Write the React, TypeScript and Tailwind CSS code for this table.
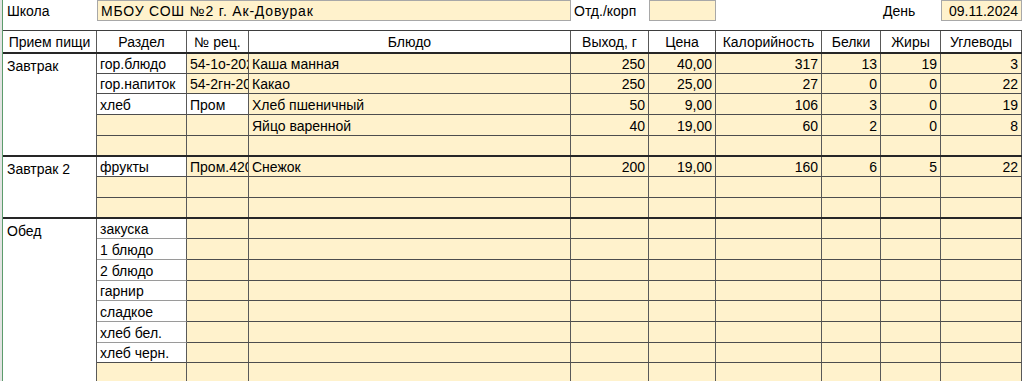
import type { ReactNode } from 'react';

type Align = 'left' | 'right' | 'center';

interface Col {
  w: string;
  align: Align;
}

// columns after the meal column: Раздел .. Углеводы
const cols: Col[] = [
  { w: 'w-[90px]', align: 'left' },
  { w: 'w-[62px]', align: 'left' },
  { w: 'w-[322px]', align: 'left' },
  { w: 'w-[78px]', align: 'right' },
  { w: 'w-[67px]', align: 'right' },
  { w: 'w-[106px]', align: 'right' },
  { w: 'w-[59px]', align: 'right' },
  { w: 'w-[60px]', align: 'right' },
  { w: 'w-[81px]', align: 'right' },
];

const headers = ['Раздел', '№ рец.', 'Блюдо', 'Выход, г', 'Цена', 'Калорийность', 'Белки', 'Жиры', 'Углеводы'];

interface Row {
  h: string;
  cells: string[];
  // which of the first two columns are white (filled in)
  whiteB?: boolean;
  whiteC?: boolean;
  lightLine?: boolean;
}

interface Section {
  meal: string;
  rows: Row[];
}

const empty = ['', '', '', '', '', '', '', '', ''];

const sections: Section[] = [
  {
    meal: 'Завтрак',
    rows: [
      { h: 'h-[20px]', whiteB: true, cells: ['гор.блюдо', '54-1о-2020', 'Каша манная', '250', '40,00', '317', '13', '19', '3'] },
      { h: 'h-[20px]', whiteB: true, cells: ['гор.напиток', '54-2гн-2020', 'Какао', '250', '25,00', '27', '0', '0', '22'] },
      { h: 'h-[21px]', whiteB: true, whiteC: true, cells: ['хлеб', 'Пром', 'Хлеб пшеничный', '50', '9,00', '106', '3', '0', '19'] },
      { h: 'h-[21px]', cells: ['', '', 'Яйцо варенной', '40', '19,00', '60', '2', '0', '8'] },
      { h: 'h-[19px]', cells: empty },
    ],
  },
  {
    meal: 'Завтрак 2',
    rows: [
      { h: 'h-[20px]', whiteB: true, cells: ['фрукты', 'Пром.420', 'Снежок', '200', '19,00', '160', '6', '5', '22'] },
      { h: 'h-[21px]', cells: empty },
      { h: 'h-[19px]', cells: empty },
    ],
  },
  {
    meal: 'Обед',
    rows: [
      { h: 'h-[20px]', whiteB: true, lightLine: true, cells: ['закуска', '', '', '', '', '', '', '', ''] },
      { h: 'h-[21px]', whiteB: true, lightLine: true, cells: ['1 блюдо', '', '', '', '', '', '', '', ''] },
      { h: 'h-[21px]', whiteB: true, lightLine: true, cells: ['2 блюдо', '', '', '', '', '', '', '', ''] },
      { h: 'h-[20px]', whiteB: true, lightLine: true, cells: ['гарнир', '', '', '', '', '', '', '', ''] },
      { h: 'h-[21px]', whiteB: true, lightLine: true, cells: ['сладкое', '', '', '', '', '', '', '', ''] },
      { h: 'h-[21px]', whiteB: true, lightLine: true, cells: ['хлеб бел.', '', '', '', '', '', '', '', ''] },
      { h: 'h-[20px]', whiteB: true, cells: ['хлеб черн.', '', '', '', '', '', '', '', ''] },
      { h: 'h-[21px]', cells: empty },
      { h: 'h-[21px]', cells: empty },
    ],
  },
];

function Cell({ col, bg, line, last, children }: { col: Col; bg: string; line: string; last: boolean; children?: ReactNode }) {
  const align =
    col.align === 'right' ? 'justify-end pr-[3px]' : col.align === 'center' ? 'justify-center' : 'justify-start pl-[3px]';
  return (
    <div
      className={`${col.w} h-full shrink-0 box-border flex items-center pt-[1px] overflow-hidden whitespace-nowrap border-r border-[#595959] ${align} ${bg} ${
        last ? '' : `border-b ${line}`
      }`}
    >
      {children}
    </div>
  );
}

function TableRow({ row, last }: { row: Row; last: boolean }) {
  return (
    <div className={`flex shrink-0 ${row.h}`}>
      {cols.map((col, i) => {
        let bg = 'bg-[#fff2cc]';
        if (i === 0 && row.whiteB) bg = 'bg-white';
        if (i === 1 && row.whiteC) bg = 'bg-white';
        const line = i === 0 && row.lightLine ? 'border-b-[#9a9a9a]' : 'border-b-[#4d4d4d]';
        return (
          <Cell key={i} col={col} bg={bg} line={line} last={last}>
            {row.cells[i]}
          </Cell>
        );
      })}
    </div>
  );
}

export default function App() {
  return (
    <div
      className="flex items-start h-[381px] w-[1024px] overflow-hidden bg-white text-[14px] leading-none text-black"
      style={{ fontFamily: '"Liberation Sans", Arial, sans-serif' }}
    >
      {/* row header edge */}
      <div className="w-[3px] h-full shrink-0 box-border bg-[#e3e3e3] border-r border-[#5c9c6c]" />

      <div className="flex flex-col shrink-0">
        {/* School line */}
        <div className="flex shrink-0 h-[21px]">
          <div className="w-[94px] flex items-center pl-[4px]">Школа</div>
          <div className="w-[474px] box-border flex items-center pl-[3px] tracking-[0.8px] bg-[#fff2cc] border border-[#a8a8a8]">
            МБОУ СОШ №2 г. Ак-Довурак
          </div>
          <div className="w-[78px] flex items-center pl-[3px]">Отд./корп</div>
          <div className="w-[67px] box-border bg-[#fff2cc] border border-[#a8a8a8]" />
          <div className="w-[165px]" />
          <div className="w-[60px] flex items-center pl-[2px]">День</div>
          <div className="w-[81px] box-border flex items-center justify-end pr-[3px] bg-[#fff2cc] border border-[#a8a8a8]">
            09.11.2024
          </div>
        </div>

        {/* Header */}
        <div className="mt-[9px] flex shrink-0 h-[24px] box-border border-t border-b-2 border-t-[#3d3d3d] border-b-[#262626]">
          <div className="w-[94px] shrink-0 box-border flex items-center justify-center border-r border-[#595959]">
            Прием пищи
          </div>
          {headers.map((h, i) => (
            <div
              key={h}
              className={`${cols[i].w} shrink-0 box-border flex items-center justify-center border-r border-[#595959]`}
            >
              {h}
            </div>
          ))}
        </div>

        {/* Body */}
        {sections.map((s) => (
          <div key={s.meal} className="flex shrink-0 box-border border-b-2 border-[#262626]">
            <div className="w-[94px] shrink-0 box-border border-r border-[#595959] pl-[4px] pt-[5px]">{s.meal}</div>
            <div className="flex flex-col shrink-0">
              {s.rows.map((r, i) => (
                <TableRow key={i} row={r} last={i === s.rows.length - 1} />
              ))}
            </div>
          </div>
        ))}
      </div>
    </div>
  );
}
